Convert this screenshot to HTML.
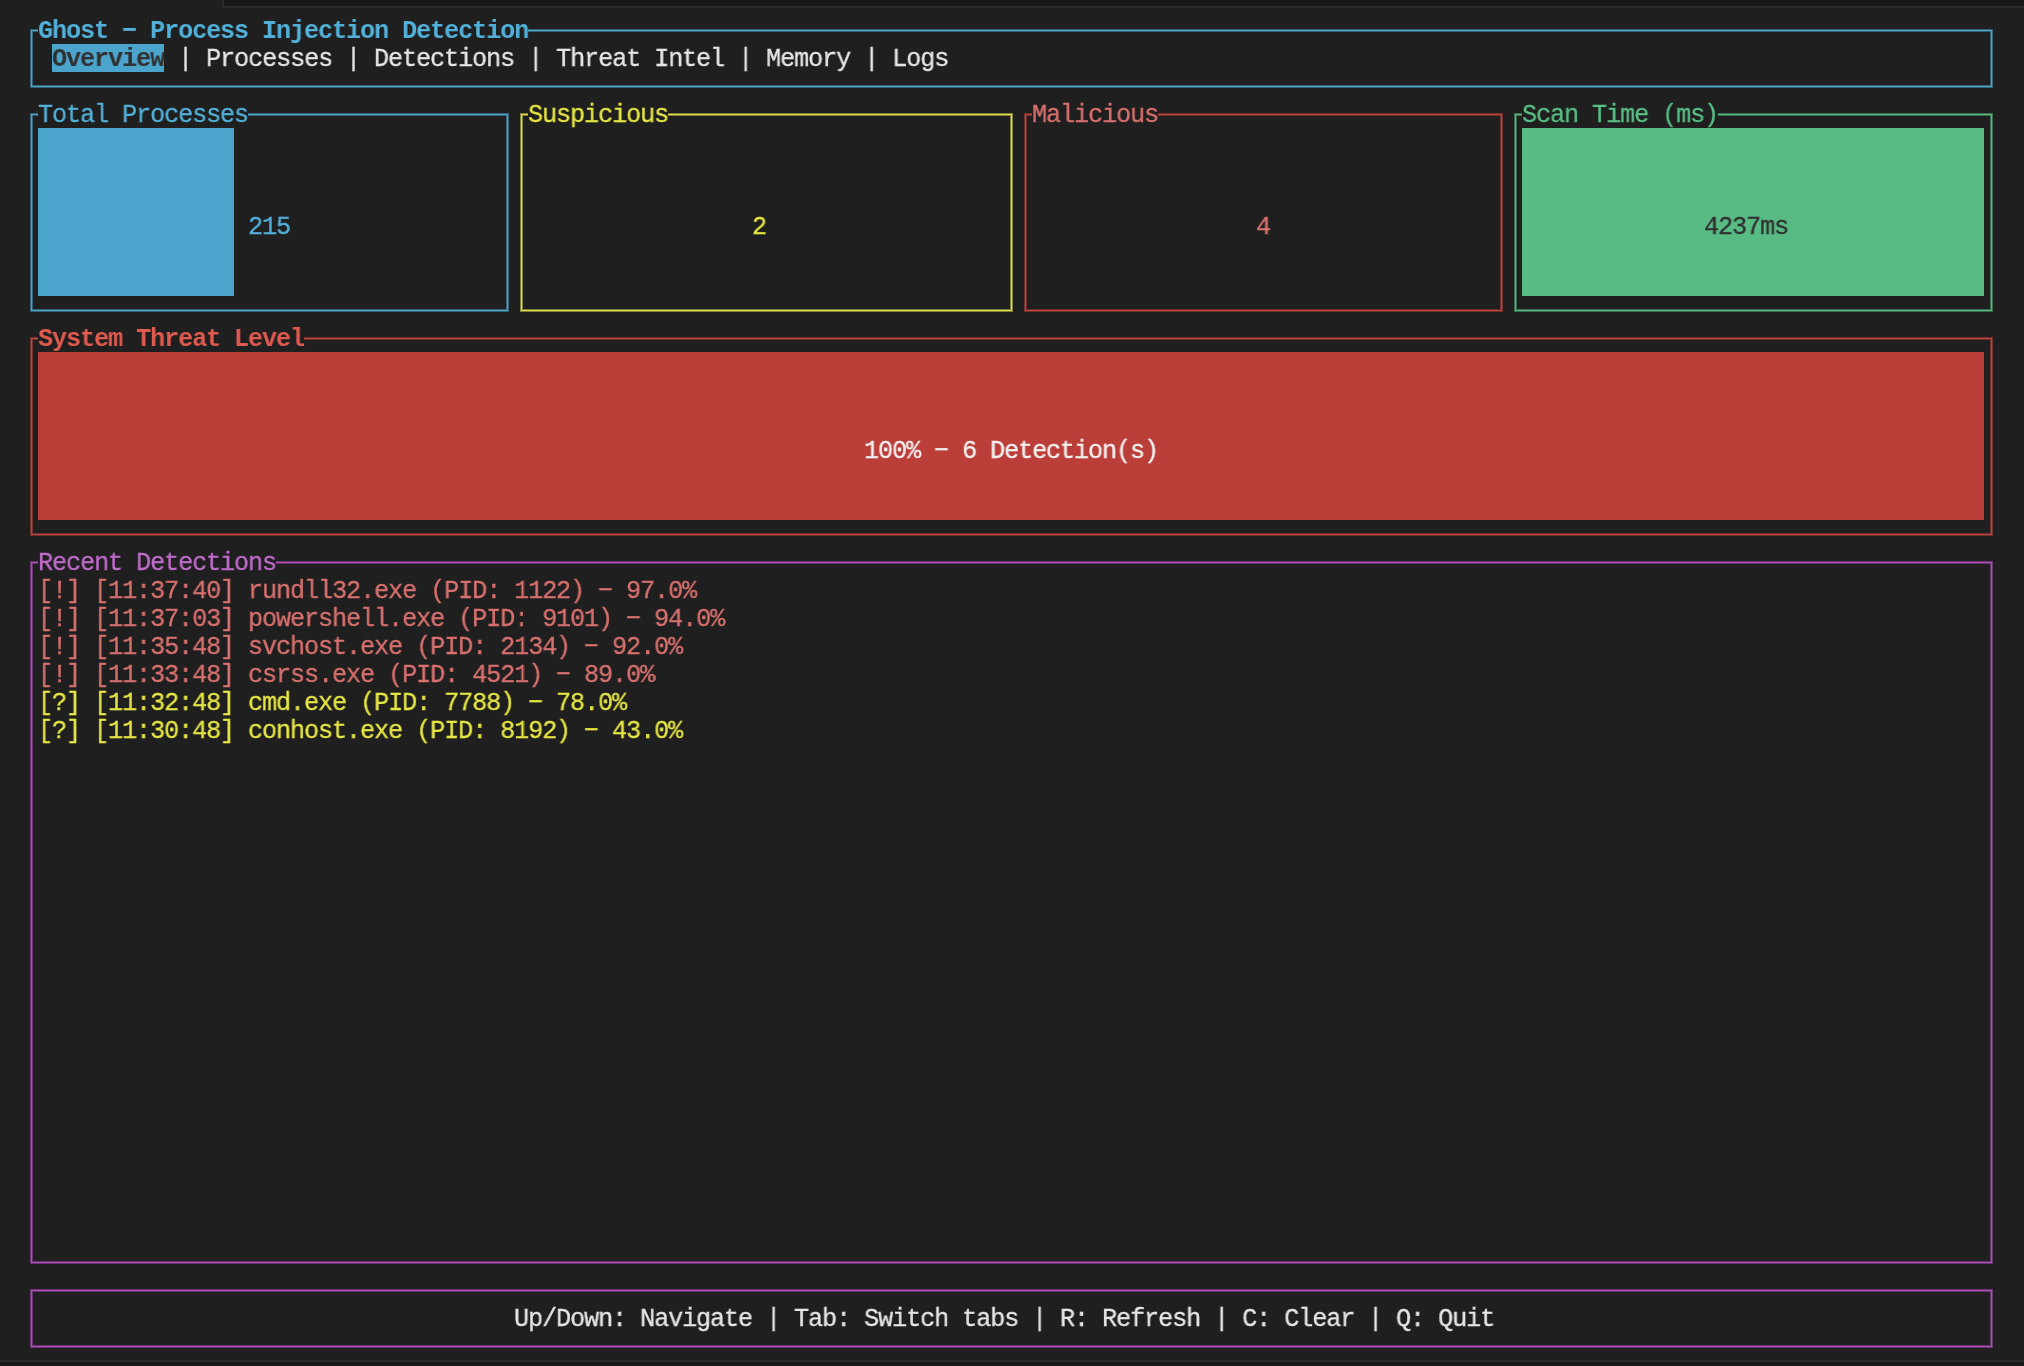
<!DOCTYPE html>
<html><head><meta charset="utf-8"><style>
html,body{margin:0;padding:0}
body{width:2024px;height:1366px;background:#1f1f1f;position:relative;overflow:hidden;font-family:"Liberation Mono",monospace;font-size:26.5px;line-height:28px}
div,p{position:absolute;margin:0;padding:0}
p{white-space:pre;letter-spacing:-1.163px;height:28px;-webkit-text-stroke:0.3px currentColor;transform:scaleX(0.95);transform-origin:0 0;will-change:transform}
</style></head><body>
<div style="left:222px;top:0px;width:1802px;height:8px;background:#2b2b2b"></div>
<div style="left:224px;top:0px;width:1800px;height:6px;background:#181818"></div>
<div style="left:0px;top:1360px;width:2024px;height:2px;background:#2b2b2b"></div>
<div style="left:0px;top:1362px;width:2024px;height:4px;background:#181818"></div>
<div style="left:30px;top:29px;width:1963px;height:59px;box-sizing:border-box;border:1px solid #356275;box-shadow:inset 0 0 0 1px #4ba4cb,inset 0 0 0 2px #356275"></div>
<div style="left:38px;top:26px;width:490px;height:10px;background:#1f1f1f"></div>
<p style="left:37.5px;top:17px;color:#52b1da;font-weight:bold;-webkit-text-stroke-width:0.0px">Ghost − Process Injection Detection</p>
<div style="left:52px;top:44px;width:112px;height:28px;background:#4ba4cb"></div>
<p style="left:51.5px;top:45px;color:#303030;font-weight:bold;-webkit-text-stroke-width:0.0px">Overview</p>
<p style="left:163.5px;top:45px;color:#e6e6e6"> | Processes | Detections | Threat Intel | Memory | Logs</p>
<div style="left:30px;top:113px;width:479px;height:199px;box-sizing:border-box;border:1px solid #356275;box-shadow:inset 0 0 0 1px #4ba4cb,inset 0 0 0 2px #356275"></div>
<div style="left:38px;top:110px;width:210px;height:10px;background:#1f1f1f"></div>
<p style="left:37.5px;top:101px;color:#52b1da">Total Processes</p>
<div style="left:38px;top:128px;width:196px;height:168px;background:#4ba4cb"></div>
<p style="left:247.5px;top:213px;color:#52b1da">215</p>
<div style="left:520px;top:113px;width:493px;height:199px;box-sizing:border-box;border:1px solid #808034;box-shadow:inset 0 0 0 1px #e0e04a,inset 0 0 0 2px #808034"></div>
<div style="left:528px;top:110px;width:140px;height:10px;background:#1f1f1f"></div>
<p style="left:527.5px;top:101px;color:#e5e545">Suspicious</p>
<p style="left:751.5px;top:213px;color:#e5e545">2</p>
<div style="left:1024px;top:113px;width:479px;height:199px;box-sizing:border-box;border:1px solid #70312d;box-shadow:inset 0 0 0 1px #c0433b,inset 0 0 0 2px #70312d"></div>
<div style="left:1032px;top:110px;width:126px;height:10px;background:#1f1f1f"></div>
<p style="left:1031.5px;top:101px;color:#d8716f">Malicious</p>
<p style="left:1255.5px;top:213px;color:#d8716f">4</p>
<div style="left:1514px;top:113px;width:479px;height:199px;box-sizing:border-box;border:1px solid #3a6c50;box-shadow:inset 0 0 0 1px #56b982,inset 0 0 0 2px #3a6c50"></div>
<div style="left:1522px;top:110px;width:196px;height:10px;background:#1f1f1f"></div>
<p style="left:1521.5px;top:101px;color:#58bf86">Scan Time (ms)</p>
<div style="left:1522px;top:128px;width:462px;height:168px;background:#58bb84"></div>
<p style="left:1703.5px;top:213px;color:#303030">4237ms</p>
<div style="left:30px;top:337px;width:1963px;height:199px;box-sizing:border-box;border:1px solid #70312d;box-shadow:inset 0 0 0 1px #c0433b,inset 0 0 0 2px #70312d"></div>
<div style="left:38px;top:334px;width:266px;height:10px;background:#1f1f1f"></div>
<p style="left:37.5px;top:325px;color:#e05a50;font-weight:bold;-webkit-text-stroke-width:0.0px">System Threat Level</p>
<div style="left:38px;top:352px;width:1946px;height:168px;background:#bb3e38"></div>
<p style="left:863.5px;top:437px;color:#f2f2f2">100% − 6 Detection(s)</p>
<div style="left:30px;top:561px;width:1963px;height:703px;box-sizing:border-box;border:1px solid #68366e;box-shadow:inset 0 0 0 1px #b24cbc,inset 0 0 0 2px #68366e"></div>
<div style="left:38px;top:558px;width:238px;height:10px;background:#1f1f1f"></div>
<p style="left:37.5px;top:549px;color:#c06ccb">Recent Detections</p>
<p style="left:37.5px;top:577px;color:#d8716f">[!] [11:37:40] rundll32.exe (PID: 1122) − 97.0%</p>
<p style="left:37.5px;top:605px;color:#d8716f">[!] [11:37:03] powershell.exe (PID: 9101) − 94.0%</p>
<p style="left:37.5px;top:633px;color:#d8716f">[!] [11:35:48] svchost.exe (PID: 2134) − 92.0%</p>
<p style="left:37.5px;top:661px;color:#d8716f">[!] [11:33:48] csrss.exe (PID: 4521) − 89.0%</p>
<p style="left:37.5px;top:689px;color:#e5e545">[?] [11:32:48] cmd.exe (PID: 7788) − 78.0%</p>
<p style="left:37.5px;top:717px;color:#e5e545">[?] [11:30:48] conhost.exe (PID: 8192) − 43.0%</p>
<div style="left:30px;top:1289px;width:1963px;height:59px;box-sizing:border-box;border:1px solid #68366e;box-shadow:inset 0 0 0 1px #b24cbc,inset 0 0 0 2px #68366e"></div>
<p style="left:513.5px;top:1305px;color:#e6e6e6">Up/Down: Navigate | Tab: Switch tabs | R: Refresh | C: Clear | Q: Quit</p>
</body></html>
